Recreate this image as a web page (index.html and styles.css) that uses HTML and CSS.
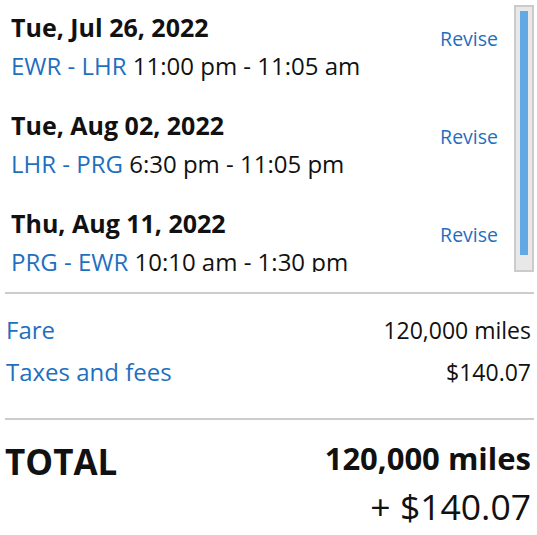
FILE: index.html
```html
<!DOCTYPE html>
<html>
<head>
<meta charset="utf-8">
<link rel="stylesheet" href="styles.css">
</head>
<body>
<div class="page">
  <div class="trips-wrap">
    <div class="trips">
      <div class="trip">
        <div class="trip-info">
          <div class="date">Tue, Jul 26, 2022</div>
          <div class="route"><span class="code">EWR - LHR</span> 11:00 pm - 11:05 am</div>
        </div>
        <a class="revise">Revise</a>
      </div>
      <div class="trip">
        <div class="trip-info">
          <div class="date">Tue, Aug 02, 2022</div>
          <div class="route"><span class="code">LHR - PRG</span> 6:30 pm - 11:05 pm</div>
        </div>
        <a class="revise">Revise</a>
      </div>
      <div class="trip">
        <div class="trip-info">
          <div class="date">Thu, Aug 11, 2022</div>
          <div class="route"><span class="code">PRG - EWR</span> 10:10 am - 1:30 pm</div>
        </div>
        <a class="revise">Revise</a>
      </div>
    </div>
    <div class="scrollbar"><div class="scroll-thumb"></div></div>
  </div>
  <div class="fees">
    <div class="fee-row"><span class="fee-label">Fare</span><span class="fee-value">120,000 miles</span></div>
    <div class="fee-row"><span class="fee-label">Taxes and fees</span><span class="fee-value">$140.07</span></div>
  </div>
  <div class="total">
    <div class="total-label">TOTAL</div>
    <div class="total-values">
      <div class="total-miles">120,000 miles</div>
      <div class="total-cash">+ $140.07</div>
    </div>
  </div>
</div>
</body>
</html>
```
FILE: styles.css
```css
* { box-sizing: border-box; }
html, body { margin: 0; padding: 0; background: #fff; }
body { font-family: "Open Sans", "Liberation Sans", sans-serif; color: #111; }
.page { padding: 0 3px 0 5px; }

.trips-wrap {
  display: flex;
  height: 272px;
}
.trips {
  flex: 1;
  overflow: hidden;
  padding: 8px 16px 0 6px;
}
.scrollbar {
  width: 20px;
  margin-top: 5px;
  height: 267px;
  background: #e8e8e8;
  border: 2px solid #cbcbcb;
  padding: 4px;
}
.scroll-thumb {
  height: 244px;
  background: #62a8e5;
}

.trip {
  display: flex;
  justify-content: space-between;
  align-items: flex-start;
  margin-bottom: 21px;
}
.date { font-size: 25px; font-weight: 700; line-height: 38px; color: #111; white-space: nowrap; }
.route { font-size: 24px; line-height: 39px; color: #111; white-space: nowrap; }
.code { color: #1f6fbf; }
.revise { font-size: 19.5px; color: #1f6fbf; line-height: 26px; margin-top: 18px; }

.fees {
  border-top: 2px solid #cccccc;
  border-bottom: 2px solid #cccccc;
  margin-top: 20px;
  padding: 15px 3px 25px 1px;
}
.fee-row { display: flex; justify-content: space-between; align-items: baseline; line-height: 42px; }
.fee-label { font-size: 24px; color: #1f6fbf; }
.fee-value { font-size: 23px; color: #111; }

.total {
  display: flex;
  justify-content: space-between;
  align-items: flex-start;
  padding: 15px 3px 0 0;
}
.total-label { font-size: 35px; font-weight: 700; line-height: 54px; }
.total-values { text-align: right; }
.total-miles { font-size: 31px; font-weight: 700; line-height: 47px; }
.total-cash { font-size: 35.5px; line-height: 48px; }
```
